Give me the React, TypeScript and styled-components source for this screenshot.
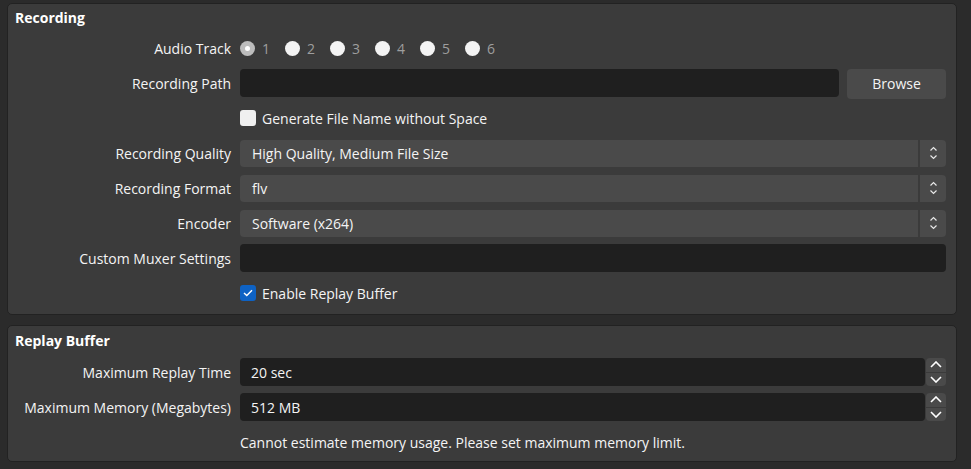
import React from "react";
import styled, { createGlobalStyle } from "styled-components";

const Global = createGlobalStyle`
  html, body { margin: 0; padding: 0; background: #2b2b2b; }
  body { font-family: "Open Sans", "Noto Sans", sans-serif; font-size: 14px; color: #fefefe; }
  * { box-sizing: border-box; }
`;

const Page = styled.div`
  width: 971px;
  height: 469px;
  padding: 3px 14px 0 7px;
  display: flex;
  flex-direction: column;
  gap: 10px;
  background: #2b2b2b;
`;

const Group = styled.section<{ $bottom: number; $title: number }>`
  background: #3b3b3b;
  border: 1px solid #222222;
  border-radius: 5px;
  padding: 3px 10px ${(p) => p.$bottom}px 7px;
  display: grid;
  grid-template-columns: 216px 1fr;
  grid-template-rows: ${(p) => p.$title}px;
  grid-auto-rows: 28px;
  column-gap: 9px;
  row-gap: 7px;
`;

const Title = styled.h3`
  grid-column: 1 / -1;
  margin: 0;
  font-size: 14px;
  font-weight: 700;
  display: flex;
  align-items: center;
  color: #ffffff;
`;

const Label = styled.label`
  grid-column: 1;
  display: flex;
  align-items: center;
  justify-content: flex-end;
  white-space: nowrap;
  color: #f4f4f4;
`;

const Field = styled.div`
  grid-column: 2;
  display: flex;
  align-items: center;
  gap: 8px;
  min-width: 0;
`;

const TextInput = styled.div`
  flex: 1;
  height: 28px;
  background: #1f1f1f;
  border-radius: 4px;
  display: flex;
  align-items: center;
  padding: 0 11px;
  color: #f4f4f4;
`;

const Button = styled.button`
  width: 99px;
  height: 30px;
  margin-top: 1px;
  background: #4a4a4a;
  border: none;
  border-radius: 4px;
  color: #f4f4f4;
  font: inherit;
`;

const RadioList = styled.div`
  display: flex;
  align-items: center;
`;

const RadioItem = styled.span`
  width: 45px;
  display: flex;
  align-items: center;
  gap: 7px;
  color: #9e9e9e;
`;

const RadioDot = styled.span<{ $checked?: boolean }>`
  width: 15px;
  height: 15px;
  border-radius: 50%;
  background: ${(p) => (p.$checked ? "#bdbdbd" : "#f3f3f3")};
  display: flex;
  align-items: center;
  justify-content: center;
  &::after {
    content: "";
    width: 5px;
    height: 5px;
    border-radius: 50%;
    background: #ffffff;
    display: ${(p) => (p.$checked ? "block" : "none")};
  }
`;

const CheckRow = styled.label`
  display: flex;
  align-items: center;
  gap: 6px;
  color: #f4f4f4;
`;

const CheckBox = styled.span<{ $checked?: boolean }>`
  width: 16px;
  height: 16px;
  border-radius: 3px;
  background: ${(p) => (p.$checked ? "#0e62c4" : "#f0f0f0")};
  display: flex;
  align-items: center;
  justify-content: center;
`;

const Combo = styled.div`
  flex: 1;
  height: 27px;
  display: flex;
  gap: 2px;
`;

const ComboValue = styled.div`
  flex: 1;
  background: #4a4a4a;
  border-radius: 4px 0 0 4px;
  display: flex;
  align-items: center;
  padding: 0 12px;
  color: #f4f4f4;
`;

const ComboArrow = styled.div`
  width: 26px;
  background: #4a4a4a;
  border-radius: 0 4px 4px 0;
  display: flex;
  align-items: center;
  justify-content: center;
`;

const Spin = styled.div`
  flex: 1;
  height: 28px;
  display: flex;
  gap: 1px;
`;

const SpinButtons = styled.div`
  width: 20px;
  display: flex;
  flex-direction: column;
  gap: 1px;
`;

const SpinButton = styled.div<{ $pos: "up" | "down" }>`
  flex: 1;
  background: #4a4a4a;
  border-radius: ${(p) => (p.$pos === "up" ? "4px 4px 0 0" : "0 0 4px 4px")};
  display: flex;
  align-items: center;
  justify-content: center;
`;

const Note = styled.div`
  grid-column: 2;
  display: flex;
  align-items: center;
  color: #f4f4f4;
`;

const Updown = () => (
  <svg width="9" height="14" viewBox="0 0 9 14">
    <path d="M1.5 4.5 L4.5 1.5 L7.5 4.5 M1.5 9.5 L4.5 12.5 L7.5 9.5" stroke="#e8e8e8" strokeWidth="1.2" fill="none" />
  </svg>
);

const Chevron = ({ up }: { up?: boolean }) => (
  <svg width="12" height="7" viewBox="0 0 12 7">
    <path d={up ? "M1 6 L6 1 L11 6" : "M1 1 L6 6 L11 1"} stroke="#ffffff" strokeWidth="1.6" fill="none" />
  </svg>
);

const Check = () => (
  <svg width="10" height="8" viewBox="0 0 10 8">
    <path d="M1 4 L3.8 6.6 L9 1.2" stroke="#ffffff" strokeWidth="1.4" fill="none" />
  </svg>
);

const ComboBox = ({ value }: { value: string }) => (
  <Combo>
    <ComboValue>{value}</ComboValue>
    <ComboArrow>
      <Updown />
    </ComboArrow>
  </Combo>
);

const SpinBox = ({ value }: { value: string }) => (
  <Spin>
    <TextInput>{value}</TextInput>
    <SpinButtons>
      <SpinButton $pos="up">
        <Chevron up />
      </SpinButton>
      <SpinButton $pos="down">
        <Chevron />
      </SpinButton>
    </SpinButtons>
  </Spin>
);

export default function App() {
  return (
    <>
      <Global />
      <Page>
        <Group $bottom={7} $title={20}>
          <Title>Recording</Title>
          <Label>Audio Track</Label>
          <Field>
            <RadioList>
              {[1, 2, 3, 4, 5, 6].map((n) => (
                <RadioItem key={n}>
                  <RadioDot $checked={n === 1} />
                  {n}
                </RadioItem>
              ))}
            </RadioList>
          </Field>
          <Label>Recording Path</Label>
          <Field>
            <TextInput />
            <Button>Browse</Button>
          </Field>
          <Field>
            <CheckRow>
              <CheckBox />
              Generate File Name without Space
            </CheckRow>
          </Field>
          <Label>Recording Quality</Label>
          <Field>
            <ComboBox value="High Quality, Medium File Size" />
          </Field>
          <Label>Recording Format</Label>
          <Field>
            <ComboBox value="flv" />
          </Field>
          <Label>Encoder</Label>
          <Field>
            <ComboBox value="Software (x264)" />
          </Field>
          <Label>Custom Muxer Settings</Label>
          <Field>
            <TextInput />
          </Field>
          <Field>
            <CheckRow>
              <CheckBox $checked>
                <Check />
              </CheckBox>
              Enable Replay Buffer
            </CheckRow>
          </Field>
        </Group>
        <Group $bottom={5} $title={22}>
          <Title>Replay Buffer</Title>
          <Label>Maximum Replay Time</Label>
          <Field>
            <SpinBox value="20 sec" />
          </Field>
          <Label>Maximum Memory (Megabytes)</Label>
          <Field>
            <SpinBox value="512 MB" />
          </Field>
          <Note>Cannot estimate memory usage. Please set maximum memory limit.</Note>
        </Group>
      </Page>
    </>
  );
}
